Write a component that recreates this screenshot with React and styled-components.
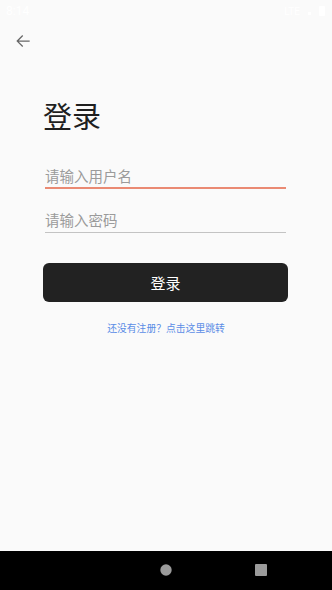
import React from "react";
import styled, { createGlobalStyle } from "styled-components";

const Global = createGlobalStyle`
  html, body { margin: 0; padding: 0; background: #fafafa; }
  * { box-sizing: border-box; }
`;

const Page = styled.div`
  width: 332px;
  height: 590px;
  display: flex;
  flex-direction: column;
  background: #fafafa;
  font-family: "Noto Sans CJK SC", "Noto Sans", sans-serif;
  overflow: hidden;
`;

const StatusBar = styled.div`
  height: 24px;
  flex: none;
  display: flex;
  align-items: center;
  justify-content: space-between;
  padding: 0 7px 2px 6px;
  color: #ffffff;
  font-family: Roboto, "Noto Sans", sans-serif;
  font-size: 12px;
`;

const StatusRight = styled.div`
  display: flex;
  align-items: center;
  gap: 8px;
  font-size: 10px;
`;

const Battery = styled.span`
  width: 6px;
  height: 10px;
  background: #ffffff;
  border-radius: 1px;
`;

const Dot = styled.span`
  width: 3px;
  height: 3px;
  margin-top: 5px;
  background: #ffffff;
`;

const Toolbar = styled.div`
  height: 34px;
  flex: none;
  display: flex;
  align-items: center;
  padding-left: 13px;
`;

const BackButton = styled.button`
  border: 0;
  background: none;
  padding: 0;
  width: 20px;
  height: 20px;
  display: flex;
  color: #666666;
  cursor: pointer;
`;

const Main = styled.main`
  flex: 1;
  display: flex;
  flex-direction: column;
  padding: 0 44px 0 43px;
`;

const Title = styled.h1`
  margin: 43px 0 0 0;
  font-size: 29px;
  line-height: 29px;
  font-weight: 400;
  color: #1f1f1f;
`;

const Input = styled.input`
  display: block;
  width: 241px;
  margin-left: 2px;
  margin-top: ${(p) => p.$gap}px;
  height: ${(p) => p.$height}px;
  padding: 0 0 ${(p) => p.$pad}px 0;
  border: 0;
  border-bottom: ${(p) => (p.$focused ? "2px solid #ea8a73" : "1.5px solid #c3c3c3")};
  background: transparent;
  font-family: "Noto Sans CJK SC", sans-serif;
  font-size: 14.5px;
  line-height: 20px;
  color: #333;
  outline: none;
  &::placeholder {
    color: #9b9b9b;
  }
`;

const SubmitButton = styled.button`
  margin-top: 30px;
  height: 39px;
  width: 245px;
  border: 0;
  border-radius: 6px;
  background: #222222;
  color: #ffffff;
  font-family: "Noto Sans CJK SC", sans-serif;
  font-size: 15px;
  cursor: pointer;
`;

const RegisterLink = styled.a`
  align-self: center;
  margin-top: 20px;
  margin-left: 1px;
  font-size: 9.8px;
  line-height: 12px;
  color: #5a8de6;
  text-decoration: none;
`;

const NavBar = styled.div`
  height: 39px;
  flex: none;
  background: #000000;
  display: flex;
  align-items: center;
  justify-content: center;
  gap: 83px;
  padding-bottom: 1px;
`;

const NavSlot = styled.span`
  width: 12px;
  height: 12px;
  display: block;
  background: ${(p) => (p.$hidden ? "transparent" : "#9b9b9b")};
  border-radius: ${(p) => (p.$round ? "50%" : "1px")};
  transform: ${(p) => (p.$round ? "scale(0.95)" : "none")};
`;

export default function App() {
  return (
    <Page>
      <Global />
      <StatusBar>
        <span>8:14</span>
        <StatusRight>
          <span>LTE</span>
          <Dot />
          <Battery />
        </StatusRight>
      </StatusBar>
      <Toolbar>
        <BackButton aria-label="返回">
          <svg width="20" height="20" viewBox="0 0 24 24" fill="currentColor">
            <path d="M20 11.25H6.9l5.3-5.3-1.06-1.06L4 12l7.14 7.11 1.06-1.06-5.3-5.3H20z" />
          </svg>
        </BackButton>
      </Toolbar>
      <Main>
        <Title>登录</Title>
        <Input $focused $gap={35} $height={24} $pad={2} placeholder="请输入用户名" />
        <Input $gap={20} $height={24} $pad={3} type="password" placeholder="请输入密码" />
        <SubmitButton>登录</SubmitButton>
        <RegisterLink href="#">还没有注册？点击这里跳转</RegisterLink>
      </Main>
      <NavBar>
        <NavSlot $hidden />
        <NavSlot $round />
        <NavSlot />
      </NavBar>
    </Page>
  );
}
